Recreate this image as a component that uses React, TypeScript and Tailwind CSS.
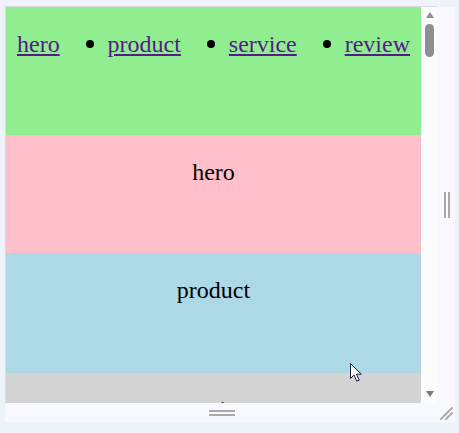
const links = ['hero', 'product', 'service', 'review']

function Bullet() {
  return <span className="-ml-[21.5px] mr-[13.5px] block w-[8px] h-[8px] rounded-full bg-black"></span>
}

function Cursor() {
  return (
    <svg className="absolute left-[349px] top-[362px]" width="14" height="21" viewBox="0 0 14 21">
      <path d="M1.5 1.5 L1.5 16.5 L5 13 L7.8 19.2 L10.2 18.2 L7.5 12.2 L12.3 12.2 Z" fill="#fff" stroke="#1e1b3a" strokeWidth="1" strokeLinejoin="round" />
    </svg>
  )
}

function Scrollbar() {
  return (
    <div className="w-[16px] h-full bg-[#fcfcfd] flex flex-col items-center">
      <svg className="mt-[5px] ml-[1px]" width="8" height="6" viewBox="0 0 8 6">
        <path d="M4 0 L8 6 L0 6 Z" fill="#8f8f8f" />
      </svg>
      <div className="mt-[6px] ml-[1px] w-[9px] h-[33px] rounded-full bg-[#8e8e8e]"></div>
      <div className="flex-1"></div>
      <svg className="mb-[6px] ml-[1px]" width="8" height="6" viewBox="0 0 8 6">
        <path d="M0 0 L8 0 L4 6 Z" fill="#7a7a7a" />
      </svg>
    </div>
  )
}

export default function App() {
  return (
    <div className="relative w-[459px] h-[433px] bg-[#eef2f9] pt-[6px] pl-[5px] font-['Liberation_Serif',serif]">
      <div className="w-[450px] flex flex-col">
        <div className="flex h-[397px]">
          <div className="w-[432px] h-full flex border-t border-l border-[#d9dbe0] bg-white">
            <div className="w-[415px] h-full overflow-hidden text-[24px] leading-[28px] text-black">
              <nav className="h-[128px] bg-[#90ee90] pt-[23px]">
                <ul className="flex justify-between px-[11px]">
                  {links.map((l, i) => (
                    <li key={l} className="flex items-center">
                      {i > 0 && <Bullet />}
                      <a href={'#' + l} className="text-[#551a8b] underline">{l}</a>
                    </li>
                  ))}
                </ul>
              </nav>
              <section className="h-[118px] bg-[#ffc0cb] pt-[23px] text-center">hero</section>
              <section className="h-[120px] bg-[#add8e6] pt-[23px] text-center">product</section>
              <section className="h-[120px] bg-[#d3d3d3] pt-[22px] text-center">service</section>
            </div>
            <Scrollbar />
          </div>
          <div className="w-[18px] mt-[1px] bg-[#f8f9fe] flex items-center justify-center">
            <div className="flex gap-[2px] ml-[1px]">
              <span className="block w-[2px] h-[26px] bg-[#a8a8a8]"></span>
              <span className="block w-[2px] h-[26px] bg-[#a8a8a8]"></span>
            </div>
          </div>
        </div>
        <div className="flex h-[19px] bg-[#f8f9fe]">
          <div className="w-[432px] flex flex-col items-center justify-center gap-[2px] pl-[2px]">
            <span className="block w-[26px] h-[2px] bg-[#a8a8a8]"></span>
            <span className="block w-[26px] h-[2px] bg-[#a8a8a8]"></span>
          </div>
          <div className="w-[18px] flex items-center justify-center">
            <svg width="14" height="14" viewBox="0 0 14 14">
              <path d="M2 13 L13 2 M7 13 L13 7" stroke="#aaaaaa" strokeWidth="2" strokeLinecap="round" />
            </svg>
          </div>
        </div>
      </div>
      <Cursor />
    </div>
  )
}
